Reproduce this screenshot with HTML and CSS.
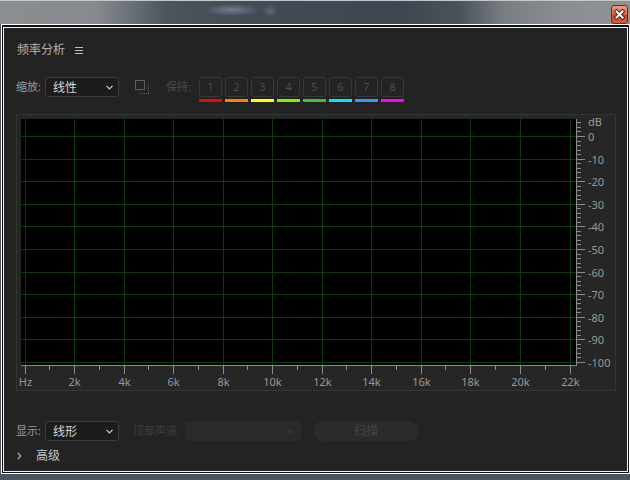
FILE: index.html
```html
<!DOCTYPE html>
<html lang="zh">
<head>
<meta charset="utf-8">
<title>频率分析</title>
<link rel="stylesheet" href="styles.css">
</head>
<body>
<div class="titlebar">
  <div class="close">
    <svg width="15" height="17" viewBox="0 0 15 17">
      <path d="M4.5 5.5L10.5 11.5M10.5 5.5L4.5 11.5" stroke="#4a2418" stroke-width="4" stroke-linecap="square"/>
      <path d="M4.5 5.5L10.5 11.5M10.5 5.5L4.5 11.5" stroke="#ffffff" stroke-width="2" stroke-linecap="square"/>
    </svg>
  </div>
</div>
<div class="window">
  <div class="inner">
    <div class="header">
      <span class="title">频率分析</span>
      <svg class="menu" width="8" height="7" viewBox="0 0 8 7"><path d="M0 0.5H8M0 3.5H8M0 6.5H8" stroke="#bdbdbd" stroke-width="1"/></svg>
    </div>

    <div class="toolbar">
      <span class="label">缩放:</span>
      <div class="select">
        <span>线性</span>
        <svg class="chev" width="7" height="5" viewBox="0 0 7 5"><path d="M0.5 0.8L3.5 3.8L6.5 0.8" fill="none" stroke="#cfcfcf" stroke-width="1.2"/></svg>
      </div>
      <svg class="overlay-icon" width="15" height="15" viewBox="0 0 15 15">
        <rect x="0.5" y="0.5" width="9" height="9" fill="none" stroke="#5c5c5c"/>
        <path d="M13.5 4V14M5 13.5H14" stroke="#5c5c5c" stroke-dasharray="1 1" fill="none"/>
      </svg>
      <span class="label hold">保持:</span>
      <div class="slots">
        <div class="slot"><div class="slot-btn">1</div><div class="bar c1"></div></div>
        <div class="slot"><div class="slot-btn">2</div><div class="bar c2"></div></div>
        <div class="slot"><div class="slot-btn">3</div><div class="bar c3"></div></div>
        <div class="slot"><div class="slot-btn">4</div><div class="bar c4"></div></div>
        <div class="slot"><div class="slot-btn">5</div><div class="bar c5"></div></div>
        <div class="slot"><div class="slot-btn">6</div><div class="bar c6"></div></div>
        <div class="slot"><div class="slot-btn">7</div><div class="bar c7"></div></div>
        <div class="slot"><div class="slot-btn">8</div><div class="bar c8"></div></div>
      </div>
    </div>

    <div class="graph">
      <svg width="598" height="275" viewBox="0 0 598 275">
        <rect x="4" y="4" width="555" height="246" fill="#000"/>
        <path fill="none" stroke="#0b3b0b" stroke-width="1"
          d="M8.5 4V250M57.5 4V250M107.5 4V250M156.5 4V250M206.5 4V250M255.5 4V250M305.5 4V250M354.5 4V250M404.5 4V250M453.5 4V250M503.5 4V250M553.5 4V250
             M4 21.5H559M4 44.5H559M4 66.5H559M4 89.5H559M4 111.5H559M4 134.5H559M4 157.5H559M4 179.5H559M4 202.5H559M4 224.5H559M4 247.5H559"/>
        <path fill="none" stroke="#8c8c8c" stroke-width="1"
          d="M559.5 4V251M4 250.5H560
             M8.5 251v8M57.5 251v8M107.5 251v8M156.5 251v8M206.5 251v8M255.5 251v8M305.5 251v8M354.5 251v8M404.5 251v8M453.5 251v8M503.5 251v8M553.5 251v8
             M32.5 251v4M82.5 251v4M131.5 251v4M181.5 251v4M230.5 251v4M280.5 251v4M329.5 251v4M379.5 251v4M428.5 251v4M478.5 251v4M528.5 251v4
             M560 21.5h8M560 44.5h8M560 66.5h8M560 89.5h8M560 111.5h8M560 134.5h8M560 157.5h8M560 179.5h8M560 202.5h8M560 224.5h8M560 247.5h8
             M560 7.5h4M560 12.5h4M560 16.5h4
             M560 26.5h4M560 30.5h4M560 35.5h4M560 39.5h4
             M560 48.5h4M560 53.5h4M560 57.5h4M560 62.5h4
             M560 71.5h4M560 75.5h4M560 80.5h4M560 84.5h4
             M560 93.5h4M560 98.5h4M560 102.5h4M560 107.5h4
             M560 116.5h4M560 120.5h4M560 125.5h4M560 129.5h4
             M560 139.5h4M560 143.5h4M560 148.5h4M560 152.5h4
             M560 161.5h4M560 166.5h4M560 170.5h4M560 175.5h4
             M560 184.5h4M560 188.5h4M560 193.5h4M560 197.5h4
             M560 206.5h4M560 211.5h4M560 215.5h4M560 220.5h4
             M560 229.5h4M560 233.5h4M560 238.5h4M560 242.5h4"/>
        <g class="axis-label">
          <text x="571" y="11">dB</text>
          <text x="571" y="25.5">0</text>
          <text x="571" y="48.5">-10</text>
          <text x="571" y="70.5">-20</text>
          <text x="571" y="93.5">-30</text>
          <text x="571" y="115.5">-40</text>
          <text x="571" y="138.5">-50</text>
          <text x="571" y="161.5">-60</text>
          <text x="571" y="183.5">-70</text>
          <text x="571" y="206.5">-80</text>
          <text x="571" y="228.5">-90</text>
          <text x="571" y="251.5">-100</text>
        </g>
        <g class="axis-label mid">
          <text x="8.5" y="271">Hz</text>
          <text x="57.5" y="271">2k</text>
          <text x="107.5" y="271">4k</text>
          <text x="156.5" y="271">6k</text>
          <text x="206.5" y="271">8k</text>
          <text x="255.5" y="271">10k</text>
          <text x="305.5" y="271">12k</text>
          <text x="354.5" y="271">14k</text>
          <text x="404.5" y="271">16k</text>
          <text x="453.5" y="271">18k</text>
          <text x="503.5" y="271">20k</text>
          <text x="553.5" y="271">22k</text>
        </g>
      </svg>
    </div>

    <div class="controls">
      <span class="label">显示:</span>
      <div class="select">
        <span>线形</span>
        <svg class="chev" width="7" height="5" viewBox="0 0 7 5"><path d="M0.5 0.8L3.5 3.8L6.5 0.8" fill="none" stroke="#cfcfcf" stroke-width="1.2"/></svg>
      </div>
      <span class="label channel">顶部声道:</span>
      <div class="select disabled">
        <span></span>
        <svg class="chev" width="7" height="5" viewBox="0 0 7 5"><path d="M0.5 0.8L3.5 3.8L6.5 0.8" fill="none" stroke="#3e3e3e" stroke-width="1.2"/></svg>
      </div>
      <div class="scan">扫描</div>
    </div>

    <div class="advanced">
      <svg class="adv-chev" width="5" height="8" viewBox="0 0 5 8"><path d="M0.8 0.8L3.8 4L0.8 7.2" fill="none" stroke="#b8b8b8" stroke-width="1.2"/></svg>
      <span>高级</span>
    </div>
  </div>
</div>
</body>
</html>
```

FILE: styles.css
```css
* {
  box-sizing: border-box;
  margin: 0;
  padding: 0;
}

html,
body {
  width: 630px;
  height: 480px;
  overflow: hidden;
}

body {
  background: #4a5561;
  font-family: "Noto Sans", "Noto Sans CJK SC", sans-serif;
  font-size: 11px;
}

.titlebar {
  height: 24px;
  border-top: 1px solid #c4c6c8;
  background:
    radial-gradient(ellipse 28px 6px at 232px 9px, rgba(150, 165, 185, 0.55), rgba(150, 165, 185, 0)),
    radial-gradient(ellipse 8px 6px at 270px 10px, rgba(130, 145, 160, 0.45), rgba(130, 145, 160, 0)),
    linear-gradient(to right, #8b8e91 0, #878a8e 95px, #6b7178 130px, #4c555e 165px, #434c56 250px, #3e4751 400px, #4a535c 460px, #7a7f84 505px, #8b8f93 570px, #8e9195 630px);
  display: flex;
  justify-content: flex-end;
  align-items: flex-start;
  padding: 4px 2px 0 0;
}

.close {
  width: 17px;
  height: 19px;
  border: 1px solid #5a3226;
  border-radius: 3px;
  background: linear-gradient(to bottom, #ec9a80 0, #dc6d4c 45%, #c4482a 55%, #d0603e 100%);
  display: flex;
  align-items: center;
  justify-content: center;
}

.close svg {
  display: block;
}

.window {
  margin-left: 1px;
  width: 629px;
  height: 450px;
  border: 1px solid #ffffff;
  padding: 2px 1px 1px 1px;
  background: #121212;
}

.inner {
  height: 100%;
  border: 1px solid #f2f2f2;
  background: #232323;
  padding: 14px 11px 0 12px;
}

.header {
  height: 16px;
  display: flex;
  align-items: center;
}

.title {
  color: #b3b3b3;
  font-size: 12px;
  line-height: 16px;
  margin-left: 1px;
}

.menu {
  margin-left: 10px;
  display: block;
}

.toolbar {
  margin-top: 19px;
  height: 25px;
  display: flex;
  align-items: flex-start;
}

.label {
  width: 29px;
  line-height: 20px;
  color: #9c9c9c;
  white-space: nowrap;
}

.select {
  width: 74px;
  height: 20px;
  border: 1px solid #3c3c3c;
  border-radius: 3px;
  background: #1c1c1c;
  color: #d6d6d6;
  font-size: 12px;
  display: flex;
  align-items: center;
  justify-content: space-between;
  padding: 0 5px 0 7px;
}

.chev {
  display: block;
}

.overlay-icon {
  display: block;
  margin-left: 16px;
  margin-top: 3px;
}

.hold {
  margin-left: 16px;
  width: 33px;
  color: #4b4b4b;
}

.slots {
  display: flex;
  gap: 3px;
}

.slot {
  width: 23px;
}

.slot-btn {
  height: 20px;
  border: 1px solid #383838;
  border-radius: 3px;
  color: #4e4e4e;
  text-align: center;
  line-height: 18px;
}

.bar {
  height: 3px;
  margin-top: 2px;
}

.c1 { background: #ff0000; }
.c2 { background: #ff8000; }
.c3 { background: #ffff00; }
.c4 { background: #80f000; }
.c5 { background: #40c040; }
.c6 { background: #00e8ff; }
.c7 { background: #3399ff; }
.c8 { background: #ff00ff; }

.graph {
  margin-top: 12px;
  width: 600px;
  height: 277px;
  border: 1px solid #353535;
  background: #262626;
}

.graph svg {
  display: block;
  overflow: visible;
}

.axis-label text {
  font-family: "Noto Sans", sans-serif;
  font-size: 11px;
  fill: #999999;
}

.axis-label.mid text {
  text-anchor: middle;
}

.controls {
  margin-top: 30px;
  height: 20px;
  display: flex;
  align-items: flex-start;
}

.channel {
  margin-left: 14px;
  width: 52px;
  color: #3e3e3e;
}

.select.disabled {
  width: 116px;
  border-color: #2a2a2a;
  background: #2a2a2a;
  padding-right: 6px;
}

.scan {
  margin-left: 12px;
  width: 106px;
  height: 20px;
  border-radius: 10px;
  background: #2b2b2b;
  color: #464646;
  font-size: 12px;
  text-align: center;
  line-height: 20px;
}

.advanced {
  margin-top: 7px;
  height: 16px;
  display: flex;
  align-items: center;
}

.adv-chev {
  display: block;
  margin-left: 1px;
}

.advanced span {
  margin-left: 14px;
  color: #c8c8c8;
  font-size: 12px;
  line-height: 16px;
}
```
